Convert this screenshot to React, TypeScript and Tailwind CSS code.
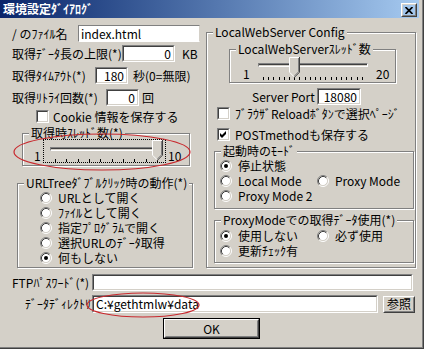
import type { ReactNode } from "react";

function TextBox({ className, value, right, thin }: { className: string; value?: string; right?: boolean; thin?: boolean }) {
  if (thin) {
    return (
      <div className={`${className} border border-t-[#808080] border-l-[#808080] border-b-white border-r-[#d4d0c8] bg-white flex items-center px-[2px]`}>
        {value}
      </div>
    );
  }
  return (
    <div className={`${className} border border-t-[#808080] border-l-[#808080] border-b-white border-r-white`}>
      <div
        className={`h-full border border-t-[#404040] border-l-[#404040] border-b-[#d4d0c8] border-r-[#d4d0c8] bg-white flex items-center px-[2px] whitespace-nowrap ${right ? "justify-end" : ""}`}
      >
        {value}
      </div>
    </div>
  );
}

function Button({ className, children, isDefault }: { className: string; children: ReactNode; isDefault?: boolean }) {
  const face = (
    <div className="h-full border border-t-white border-l-white border-b-[#404040] border-r-[#404040]">
      <div className="h-full border border-t-[#d4d0c8] border-l-[#d4d0c8] border-b-[#808080] border-r-[#808080] flex items-center justify-center">
        {children}
      </div>
    </div>
  );
  if (isDefault) return <div className={`${className} border border-black`}>{face}</div>;
  return <div className={className}>{face}</div>;
}

function Group({ label, className, children }: { label: string; className: string; children?: ReactNode }) {
  return (
    <fieldset className={`border border-[#808080] shadow-[inset_1px_1px_0_#fff,1px_1px_0_#fff] ${className}`}>
      <legend className="ml-[6px] px-[2px] bg-[#d4d0c8] leading-[12px] whitespace-nowrap">{label}</legend>
      {children}
    </fieldset>
  );
}

function CheckBox({ checked }: { checked?: boolean }) {
  return (
    <div className="w-[13px] h-[13px] shrink-0 border border-t-[#808080] border-l-[#808080] border-b-white border-r-white">
      <div className="h-full border border-t-[#404040] border-l-[#404040] border-b-[#d4d0c8] border-r-[#d4d0c8] bg-white flex items-center justify-center">
        {checked && (
          <svg width="7" height="7" viewBox="0 0 7 7">
            <path d="M0 2 L2 4 L6 0 L6 3 L2 7 L0 5 Z" fill="#000" />
          </svg>
        )}
      </div>
    </div>
  );
}

function Radio({ checked }: { checked?: boolean }) {
  return (
    <svg width="12" height="12" viewBox="0 0 12 12" className="shrink-0">
      <circle cx="6" cy="6" r="4.5" fill="#fff" />
      <path d="M2.11 9.89 A5.5 5.5 0 0 1 9.89 2.11" stroke="#808080" fill="none" />
      <path d="M9.89 2.11 A5.5 5.5 0 0 1 2.11 9.89" stroke="#fff" fill="none" />
      <path d="M2.82 9.18 A4.5 4.5 0 0 1 9.18 2.82" stroke="#404040" fill="none" />
      <path d="M9.18 2.82 A4.5 4.5 0 0 1 2.82 9.18" stroke="#d4d0c8" fill="none" />
      {checked && <circle cx="6" cy="6" r="2" fill="#000" />}
    </svg>
  );
}

function Thumb() {
  return (
    <svg width="11" height="21" viewBox="0 0 11 21">
      <path d="M0 0 H11 V15 L5.5 20.5 L0 15 Z" fill="#d4d0c8" />
      <path d="M0.5 15 V0.5 H10" stroke="#fff" fill="none" />
      <path d="M0.5 15.2 L5 19.7" stroke="#fff" fill="none" />
      <path d="M10.5 0 V15.2 L5.5 20.2" stroke="#404040" fill="none" />
      <path d="M9.5 1 V14.8 L5.5 18.8" stroke="#808080" fill="none" />
    </svg>
  );
}

function Track({ className }: { className: string }) {
  return (
    <div className={`${className} h-[4px] border border-t-[#808080] border-l-[#808080] border-b-white border-r-white`}>
      <div className="h-full border-t border-t-[#404040] bg-[#d4d0c8]" />
    </div>
  );
}

function Ticks({ count, className }: { count: number; className: string }) {
  return (
    <div className={`${className} flex justify-between`}>
      {Array.from({ length: count }).map((_, i) => (
        <div key={i} className="w-[1px] h-full bg-black" />
      ))}
    </div>
  );
}

function RadioItem({ label, checked }: { label: string; checked?: boolean }) {
  return (
    <div className="flex items-center h-[15px]">
      <Radio checked={checked} />
      <span className="ml-[6px] whitespace-nowrap">{label}</span>
    </div>
  );
}

export default function App() {
  return (
    <div className="relative w-[424px] h-[349px] bg-[#d4d0c8] border-r border-b border-r-[#404040] border-b-[#404040] font-['Noto_Sans_CJK_JP','Noto_Sans',sans-serif] text-[12px] leading-[12px] text-black overflow-hidden">
      <div className="h-full border-r border-b border-r-[#808080] border-b-[#808080] pr-[3px] pb-[3px]">
        <div className="h-full flex flex-col">
          {/* title bar */}
          <div className="h-[18px] shrink-0 flex justify-between bg-linear-to-r from-[#0a246a] to-[#a6caf0]">
            <span className="pl-[3px] leading-[18px] font-bold text-white whitespace-nowrap">環境設定ﾀﾞｲｱﾛｸﾞ</span>
            <div className="pt-[3px] pr-[2px]">
              <Button className="w-[16px] h-[14px]">
                <svg width="8" height="7" viewBox="0 0 8 7">
                  <path d="M0.5 0 L7.5 7 M7.5 0 L0.5 7" stroke="#000" strokeWidth="1.7" />
                </svg>
              </Button>
            </div>
          </div>

          {/* body */}
          <div className="flex">
            <div className="w-[200px] flex flex-col">
              <div className="mt-[7px] h-[17px] flex items-center">
                <span className="w-[78px] pl-[12px] whitespace-nowrap">/ のﾌｧｲﾙ名</span>
                <TextBox thin className="w-[122px] h-[17px]" value="index.html" />
              </div>
              <div className="mt-[3px] h-[17px] flex items-center">
                <span className="w-[122px] pl-[12px] whitespace-nowrap">取得ﾃﾞｰﾀ長の上限(*)</span>
                <TextBox right className="w-[53px] h-[17px]" value="0" />
                <span className="ml-[7px]">KB</span>
              </div>
              <div className="mt-[5px] h-[17px] flex items-center">
                <span className="w-[95px] pl-[12px] whitespace-nowrap">取得ﾀｲﾑｱｳﾄ(*)</span>
                <TextBox right className="w-[33px] h-[17px]" value="180" />
                <span className="ml-[5px] whitespace-nowrap">秒(0=無限)</span>
              </div>
              <div className="mt-[5px] h-[17px] flex items-center">
                <span className="w-[106px] pl-[12px] whitespace-nowrap">取得ﾘﾄﾗｲ回数(*)</span>
                <TextBox right className="w-[33px] h-[17px]" value="0" />
                <span className="ml-[3px]">回</span>
              </div>
              <div className="mt-[4px] h-[13px] pl-[36px] flex items-center">
                <CheckBox />
                <span className="ml-[4px] whitespace-nowrap">Cookie 情報を保存する</span>
              </div>

              <Group label="取得時ｽﾚｯﾄﾞ数(*)" className="mt-[4px] ml-[22px] w-[168px] h-[39px]">
                <div className="flex items-end pl-[11px]">
                  <span className="w-[9px] mb-[1px]">1</span>
                  <div className="relative w-[123px] h-[24px] border border-dotted border-black">
                    <Track className="mt-[7px] ml-[6px] w-[110px]" />
                    <Ticks count={10} className="mt-[8px] ml-[11px] w-[103px] h-[3px]" />
                    <div className="absolute left-[108px] top-0">
                      <Thumb />
                    </div>
                  </div>
                  <span className="ml-[2px] mb-[1px]">10</span>
                </div>
              </Group>

              <Group label="URLTreeﾀﾞﾌﾞﾙｸﾘｯｸ時の動作(*)" className="mt-[11px] ml-[17px] w-[176px] h-[91px]">
                <div className="pl-[22px] pt-[1px] flex flex-col">
                  <RadioItem label="URLとして開く" />
                  <RadioItem label="ﾌｧｲﾙとして開く" />
                  <RadioItem label="指定ﾌﾟﾛｸﾞﾗﾑで開く" />
                  <RadioItem label="選択URLのﾃﾞｰﾀ取得" />
                  <RadioItem label="何もしない" checked />
                </div>
              </Group>
            </div>

            <Group label="LocalWebServer Config" className="ml-[6px] mt-[8px] w-[210px] h-[242px]">
              <div className="flex flex-col">
                <Group label="LocalWebServerｽﾚｯﾄﾞ数" className="mt-[5px] ml-[22px] w-[167px] h-[40px]">
                  <div className="flex items-end pl-[13px]">
                    <span className="w-[15px]">1</span>
                    <div className="relative w-[112px] h-[25px]">
                      <Track className="mt-[8px] w-[110px]" />
                      <Ticks count={20} className="mt-[10px] ml-[5px] w-[100px] h-[3px]" />
                      <div className="absolute left-[31px] top-[2px]">
                        <Thumb />
                      </div>
                    </div>
                    <span className="ml-[6px]">20</span>
                  </div>
                </Group>

                <div className="mt-[5px] h-[17px] flex items-center">
                  <span className="w-[110px] pl-[45px] whitespace-nowrap">Server Port</span>
                  <TextBox right className="w-[44px] h-[17px]" value="18080" />
                </div>

                <div className="mt-[2px] h-[13px] pl-[10px] flex items-center">
                  <CheckBox />
                  <span className="ml-[5px] whitespace-nowrap">ﾌﾞﾗｳｻﾞReloadﾎﾞﾀﾝで選択ﾍﾟｰｼﾞ</span>
                </div>
                <div className="mt-[8px] h-[13px] pl-[10px] flex items-center">
                  <CheckBox checked />
                  <span className="ml-[5px] whitespace-nowrap">POSTmethodも保存する</span>
                </div>

                <Group label="起動時のﾓｰﾄﾞ" className="mt-[4px] ml-[7px] w-[200px] h-[64px]">
                  <div className="pl-[5px] pt-[1px] grid grid-cols-[97px_1fr]">
                    <RadioItem label="停止状態" checked />
                    <div />
                    <RadioItem label="Local Mode" />
                    <RadioItem label="Proxy Mode" />
                    <RadioItem label="Proxy Mode 2" />
                  </div>
                </Group>

                <Group label="ProxyModeでの取得ﾃﾞｰﾀ使用(*)" className="mt-[5px] ml-[7px] w-[200px] h-[49px]">
                  <div className="pl-[5px] pt-[2px] grid grid-cols-[97px_1fr]">
                    <RadioItem label="使用しない" checked />
                    <RadioItem label="必ず使用" />
                    <RadioItem label="更新ﾁｪｯｸ有" />
                  </div>
                </Group>
              </div>
            </Group>
          </div>

          {/* bottom */}
          <div className="mt-[6px] h-[17px] flex items-center">
            <span className="w-[92px] pl-[12px] whitespace-nowrap">FTPﾊﾟｽﾜｰﾄﾞ(*)</span>
            <TextBox className="w-[321px] h-[17px]" />
          </div>
          <div className="mt-[4px] h-[18px] flex items-center">
            <span className="w-[92px] pl-[25px] whitespace-nowrap overflow-hidden">ﾃﾞｰﾀﾃﾞｨﾚｸﾄﾘ</span>
            <TextBox className="w-[286px] h-[18px]" value="C:¥gethtmlw¥data" />
            <Button className="ml-[5px] w-[32px] h-[17px]">参照</Button>
          </div>
          <div className="mt-[5px] pl-[163px]">
            <Button isDefault className="w-[97px] h-[21px]">OK</Button>
          </div>
        </div>
      </div>

      {/* annotation ellipses */}
      <svg className="absolute inset-0 pointer-events-none" width="424" height="349" viewBox="0 0 424 349">
        <ellipse cx="102" cy="152" rx="88" ry="18" fill="none" stroke="#c8282d" strokeWidth="1.2" />
        <ellipse cx="143" cy="305" rx="56" ry="12" fill="none" stroke="#c8282d" strokeWidth="1.2" />
      </svg>
    </div>
  );
}
